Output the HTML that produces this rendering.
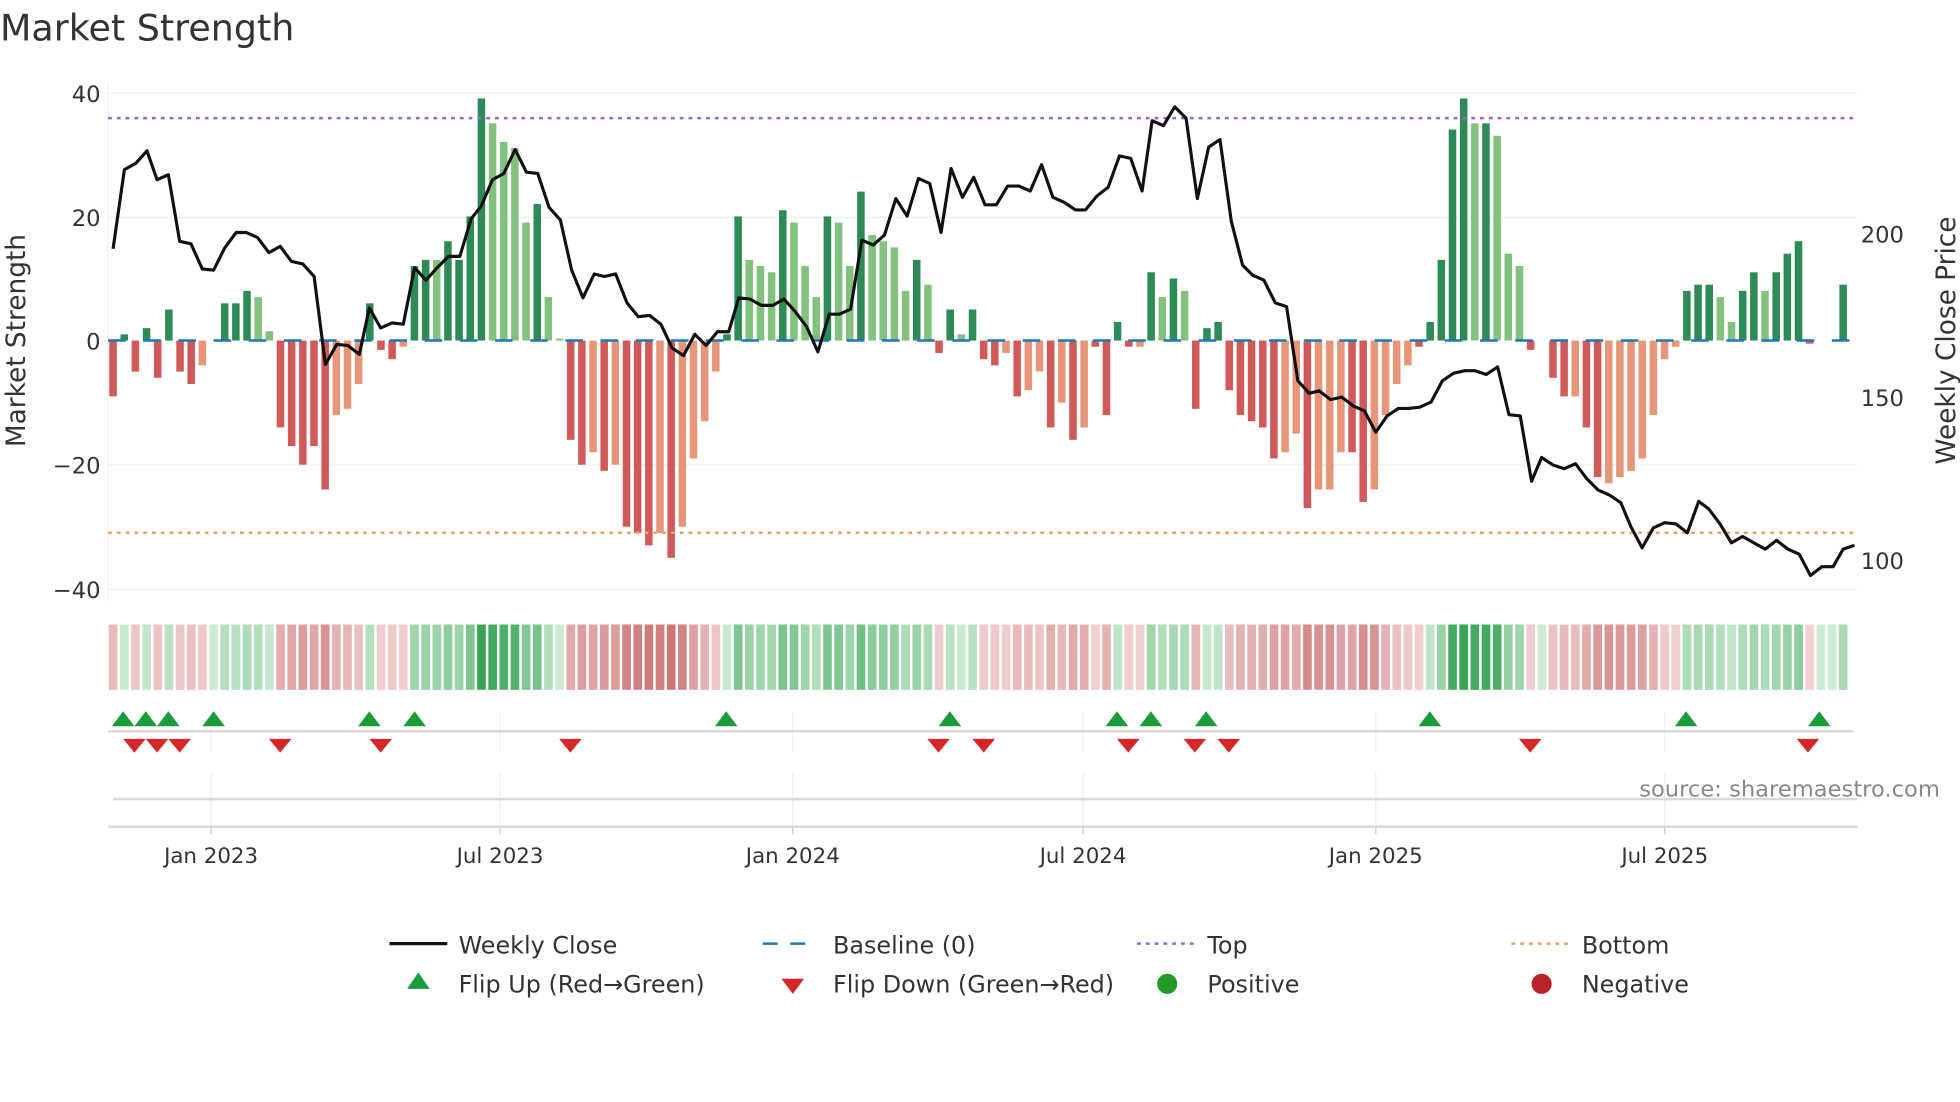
<!DOCTYPE html>
<html><head><meta charset="utf-8">
<style>
html,body{margin:0;padding:0;background:#fff;width:1960px;height:1102px;overflow:hidden}
svg{display:block}
text{font-family:"DejaVu Sans","Liberation Sans",sans-serif;fill:#333}
</style></head>
<body>
<svg id="s" width="1960" height="1102" viewBox="0 0 1560 877" xmlns="http://www.w3.org/2000/svg">
<text x="0" y="32" font-size="29">Market Strength</text>
<g stroke="#eef0f2" stroke-width="1">
<line x1="86" x2="1478" y1="74" y2="74"/><line x1="86" x2="1478" y1="173" y2="173"/>
<line x1="86" x2="1478" y1="370" y2="370"/><line x1="86" x2="1478" y1="469" y2="469"/>
<line x1="86" x2="86" y1="65" y2="478"/>
</g>
<g font-size="18" text-anchor="end">
<text x="80" y="81">40</text><text x="80" y="180">20</text><text x="80" y="278">0</text>
<text x="80" y="377">−20</text><text x="80" y="476">−40</text>
</g>
<g font-size="18">
<text x="1481" y="193">200</text><text x="1481" y="323">150</text><text x="1481" y="453">100</text>
</g>
<text transform="translate(20,271) rotate(-90)" font-size="21" text-anchor="middle">Market Strength</text>
<text transform="translate(1556,271) rotate(-90)" font-size="21" text-anchor="middle">Weekly Close Price</text>
<g id="bars"></g>
<line x1="86" x2="1478" y1="271" y2="271" stroke="#1f77b4" stroke-width="2" stroke-dasharray="14,14"/>
<line x1="86" x2="1478" y1="94" y2="94" stroke="#9467d8" stroke-width="2" stroke-dasharray="3,4"/>
<line x1="86" x2="1478" y1="424" y2="424" stroke="#f0a060" stroke-width="2" stroke-dasharray="3,4"/>
<polyline id="price" fill="none" stroke="#111" stroke-width="2.5" stroke-linejoin="round"/>
<g id="heat"></g>
<g stroke="#eef0f2" stroke-width="1" id="vg"></g>
<line x1="86" x2="1475" y1="582" y2="582" stroke="#d5d8dc" stroke-width="2"/>
<g id="tri"></g>
<line x1="90" x2="1478" y1="636" y2="636" stroke="#d5d8dc" stroke-width="2"/>
<line x1="86" x2="1478" y1="658" y2="658" stroke="#d5d8dc" stroke-width="2"/>
<text x="1544" y="634" font-size="18" text-anchor="end" style="fill:#888">source: sharemaestro.com</text>
<g font-size="17" text-anchor="middle" id="xt"></g>
<g font-size="19">
<line x1="310" x2="356" y1="751" y2="751" stroke="#111" stroke-width="2.5"/>
<text x="365" y="759">Weekly Close</text>
<line x1="607" x2="651" y1="751" y2="751" stroke="#1f77b4" stroke-width="2" stroke-dasharray="12,10"/>
<text x="663" y="759">Baseline (0)</text>
<line x1="905" x2="950" y1="751" y2="751" stroke="#9467d8" stroke-width="2" stroke-dasharray="3,4"/>
<text x="961" y="759">Top</text>
<line x1="1203" x2="1248" y1="751" y2="751" stroke="#f0a060" stroke-width="2" stroke-dasharray="3,4"/>
<text x="1259" y="759">Bottom</text>
<polygon points="333,774 342,787 324,787" fill="#1a9c3c"/>
<text x="365" y="790">Flip Up (Red→Green)</text>
<polygon points="622,779 640,779 631,791" fill="#d62728"/>
<text x="663" y="790">Flip Down (Green→Red)</text>
<circle cx="929" cy="783" r="8" fill="#229a2a"/>
<text x="961" y="790">Positive</text>
<circle cx="1227" cy="783" r="8" fill="#b82228"/>
<text x="1259" y="790">Negative</text>
</g>
</svg>
<script>
var V="-9,1,-5,2,-6,5,-5,-7,-4l,0,6,6,8,7l,1.5l,-14,-17,-20,-17,-24,-12l,-11l,-7l,6,-1.5,-3,-1l,12,13,13l,16,13,20,39,35l,32l,31l,19l,22,7l,0.3l,-16,-20,-18l,-21,-20l,-30,-31,-33,-31l,-35,-30l,-19l,-13l,-5l,1,20,13l,12l,11l,21,19l,12l,7l,20,19l,12l,24,17l,16l,15l,8l,13,9l,-2,5,1l,5,-3,-4,-2l,-9,-8l,-5l,-14,-10l,-16,-14l,-1,-12,3,-1,-1l,11,7l,10,8l,-11,2,3,-8,-12,-13,-14,-19,-18l,-15l,-27,-24l,-24l,-18l,-18,-26,-24l,-12l,-7l,-4l,-1,3,13,34,39,35l,35,33l,14l,12l,-1.5,0,-6,-9,-9l,-14,-22,-23l,-22l,-21l,-19l,-12l,-3l,-1l,8,9,9,7l,3l,8,11,8l,11,14,16,-0.5,0,0,9".split(",");
var NS="http://www.w3.org/2000/svg";
function el(p,t,a){var e=document.createElementNS(NS,t);for(var k in a)e.setAttribute(k,a[k]);document.getElementById(p).appendChild(e);return e;}
var step=(1467-90)/155;
V.forEach(function(s,i){
 var l=s.indexOf("l")>=0,v=parseFloat(s),x=90+step*i;
 if(Math.abs(v)>0.2){
  var h=Math.abs(v)*4.94,y=v>0?271-h:271;
  var c=v>0?(l?"#82c17e":"#2e8b57"):(l?"#e8967a":"#d05a5a");
  el("bars","rect",{x:x-3,y:y,width:6,height:h,fill:c});
 }
 var a=Math.min(1,Math.abs(v)/38);
 var c2;
 if(v>=0){var r=Math.round(205-150*a),g=Math.round(235-70*a),b=Math.round(210-125*a);c2="rgb("+r+","+g+","+b+")";}
 else{var r=Math.round(242-40*a),g=Math.round(210-100*a),b=Math.round(210-100*a);c2="rgb("+r+","+g+","+b+")";}
 el("heat","rect",{x:x-4.4+1,y:497,width:step-2,height:52,fill:c2});
});
var P="90,198 99,135 108,130 117,120 125,143 134,139 143,192 152,194 161,214 170,215 179,197 188,185 196,185 205,189 214,201 223,196 232,208 241,210 250,220 259,290 268,274 277,275 286,282 294,245 303,261 312,257 321,258 330,213 339,223 348,213 357,204 366,204 375,174 383,164 392,143 401,138 410,119 419,137 428,138 437,165 446,175 455,215 464,237 473,218 481,220 490,218 499,241 508,252 517,251 526,258 535,277 544,283 553,266 562,275 571,264 580,264 588,237 597,238 606,243 615,243 624,238 633,248 642,260 651,280 660,250 668,250 677,246 686,191 695,195 704,187 713,158 722,172 731,142 740,146 749,185 757,134 766,157 775,141 784,163 793,163 802,148 811,148 820,152 829,131 838,157 847,161 856,167 864,167 873,156 882,149 891,124 900,126 909,152 917,96 926,100 935,85 944,94 953,158 962,117 971,111 980,176 989,211 997,219 1006,223 1015,241 1024,244 1033,303 1042,313 1050,311 1059,318 1068,316 1077,323 1086,327 1095,344 1104,331 1113,325 1121,325 1130,324 1139,320 1148,303 1157,297 1166,295 1174,295 1183,298 1192,292 1201,330 1210,331 1219,383 1227,364 1236,370 1245,373 1254,369 1263,381 1272,390 1281,394 1290,400 1298,419 1307,436 1316,420 1325,416 1334,417 1343,424 1352,399 1360,405 1369,417 1378,432 1387,427 1396,432 1405,437 1414,430 1423,437 1432,441 1441,458 1450,451 1459,451 1467,437 1476,434";
document.getElementById("price").setAttribute("points",P);
[[168,"Jan 2023"],[398,"Jul 2023"],[631,"Jan 2024"],[862,"Jul 2024"],[1095,"Jan 2025"],[1325,"Jul 2025"]].forEach(function(t){
 el("vg","line",{x1:t[0],x2:t[0],y1:567,y2:598});
 el("vg","line",{x1:t[0],x2:t[0],y1:615,y2:658});
 el("xt","line",{x1:t[0],x2:t[0],y1:658,y2:664,stroke:"#ccc","stroke-width":1});
 var e=el("xt","text",{x:t[0],y:687});e.textContent=t[1];
});
[98,116,134,170,294,330,578,756,889,916,960,1138,1342,1448].forEach(function(x){
 el("tri","polygon",{points:(x)+",566 "+(x+9)+",578 "+(x-9)+",578",fill:"#1a9c3c"});});
[107,125,143,223,303,454,747,783,898,951,978,1218,1439].forEach(function(x){
 el("tri","polygon",{points:(x-9)+",588 "+(x+9)+",588 "+x+",599",fill:"#d62728"});});
</script>
</body></html>
